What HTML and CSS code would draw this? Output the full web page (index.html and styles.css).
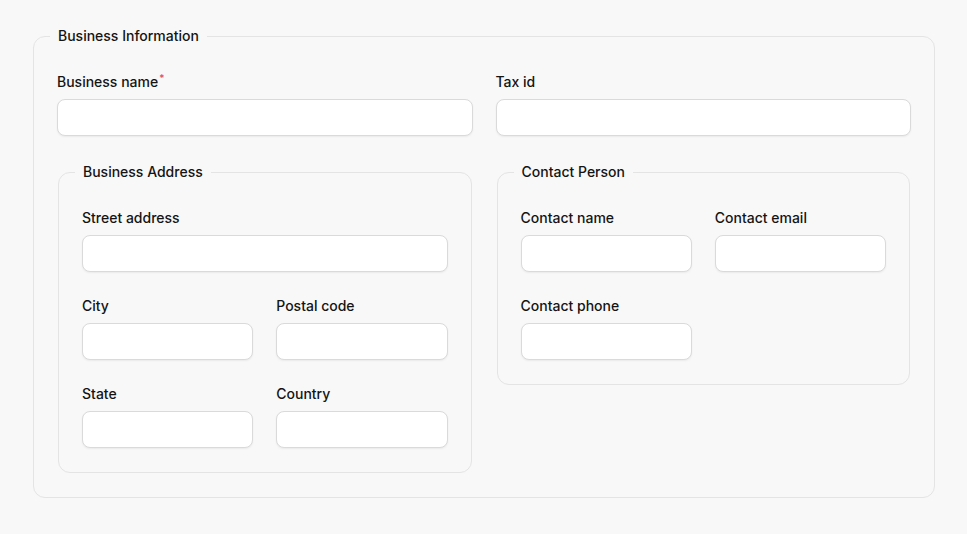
FILE: index.html
```html
<!DOCTYPE html>
<html lang="en">
<head>
  <meta charset="UTF-8">
  <title>Business Information</title>
  <link rel="stylesheet" href="styles.css">
</head>
<body>
  <form class="page">
    <fieldset class="group">
      <legend>Business Information</legend>

      <div class="row">
        <div class="field">
          <label for="bname">Business name<span class="req">*</span></label>
          <input id="bname" type="text">
        </div>
        <div class="field">
          <label for="tax">Tax id</label>
          <input id="tax" type="text">
        </div>
      </div>

      <div class="row sections">
        <!-- Address -->
        <fieldset class="group">
          <legend>Business Address</legend>
          <div class="field">
            <label for="street">Street address</label>
            <input id="street" type="text">
          </div>
          <div class="row">
            <div class="field">
              <label for="city">City</label>
              <input id="city" type="text">
            </div>
            <div class="field">
              <label for="postal">Postal code</label>
              <input id="postal" type="text">
            </div>
          </div>
          <div class="row">
            <div class="field">
              <label for="state">State</label>
              <input id="state" type="text">
            </div>
            <div class="field">
              <label for="country">Country</label>
              <input id="country" type="text">
            </div>
          </div>
        </fieldset>

        <!-- Contact -->
        <fieldset class="group">
          <legend>Contact Person</legend>
          <div class="row">
            <div class="field">
              <label for="cname">Contact name</label>
              <input id="cname" type="text">
            </div>
            <div class="field">
              <label for="cemail">Contact email</label>
              <input id="cemail" type="email">
            </div>
          </div>
          <div class="row">
            <div class="field">
              <label for="cphone">Contact phone</label>
              <input id="cphone" type="tel">
            </div>
          </div>
        </fieldset>
      </div>
    </fieldset>
  </form>
</body>
</html>
```

FILE: styles.css
```css
html, body {
  margin: 0;
  padding: 0;
  background: #f8f8f8;
  font-family: Inter, 'Liberation Sans', sans-serif;
  font-size: 14px;
  color: #141414;
}

.page {
  padding: 24px 32px 24px 33px;
}

.group {
  margin: 0;
  min-width: 0;
  padding: 24px 23px 24px 23px;
  border: 1px solid #e4e4e4;
  border-radius: 12px;
  display: flex;
  flex-direction: column;
  gap: 24px;
}

.group .group {
  margin: 0 1px;
}

.group legend {
  padding: 0 8px;
  margin-left: -7px;
  font-weight: 500;
  line-height: 24px;
}

.row {
  display: grid;
  grid-template-columns: 1fr 1fr;
  gap: 23px;
}

.sections {
  align-items: start;
}

.field {
  display: flex;
  flex-direction: column;
  min-width: 0;
}

.field label {
  font-weight: 500;
  line-height: 20px;
  margin-bottom: 7px;
}

.req {
  color: #e5484d;
  font-size: 10px;
  line-height: 0;
  position: relative;
  top: -5px;
  margin-left: 1px;
}

.field input {
  box-sizing: border-box;
  height: 37px;
  width: 100%;
  border: 1px solid #dadada;
  border-radius: 8px;
  background: #fff;
  box-shadow: 0 1px 2px rgba(0, 0, 0, 0.06);
  font: inherit;
  padding: 0 12px;
  outline: none;
}
```
